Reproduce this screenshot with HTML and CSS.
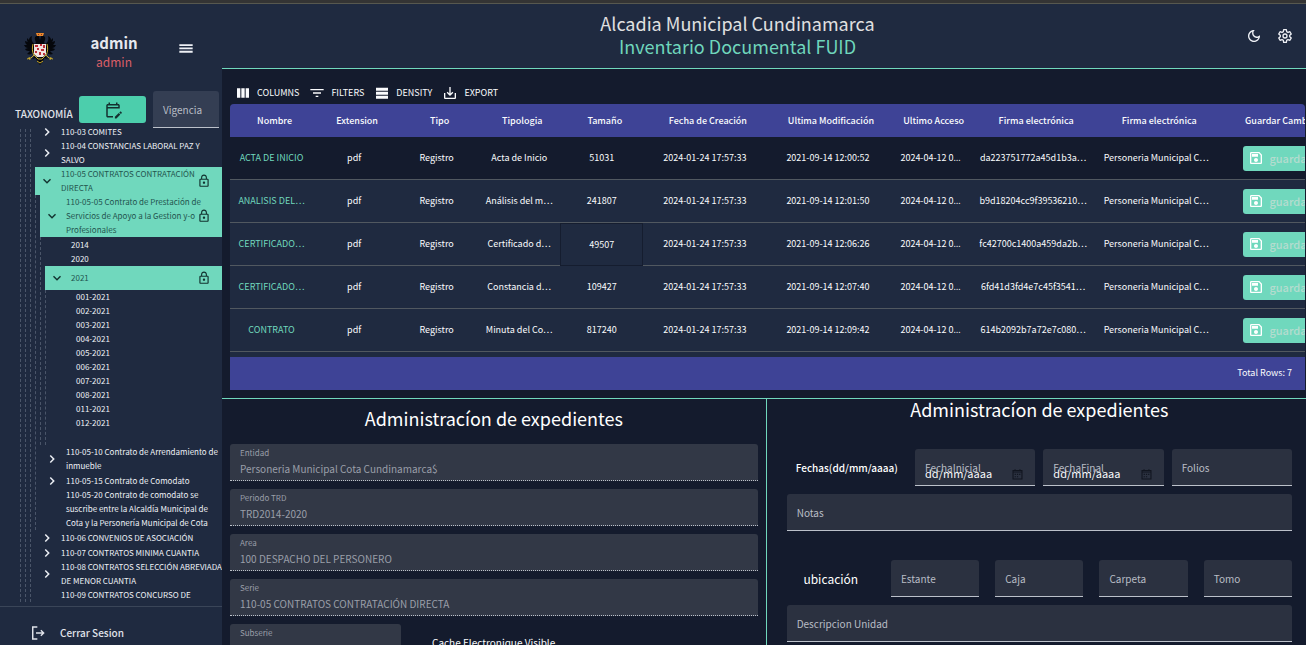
FILE: index.html
```
<!DOCTYPE html>
<html lang="es">
<head>
<meta charset="utf-8">
<title>Inventario Documental FUID</title>
<link rel="stylesheet" href="styles.css">
</head>
<body>
<svg class="sprite" aria-hidden="true">
  <symbol id="i-right" viewBox="0 0 24 24"><path d="M9.500 4 7.500 6l6 6-6 6 2 2 8-8z"/></symbol>
  <symbol id="i-down" viewBox="0 0 24 24"><path d="M18 7.500l-6 6-6-6-2 2 8 8 8-8z"/></symbol>
  <symbol id="i-lock" viewBox="0 0 24 24"><path d="M12 17c1.100 0 2-.9 2-2s-.9-2-2-2-2 .9-2 2 .9 2 2 2zm6-9h-1V6c0-2.800-2.200-5-5-5S7 3.200 7 6v2H6c-1.100 0-2 .9-2 2v10c0 1.100.9 2 2 2h12c1.100 0 2-.9 2-2V10c0-1.100-.9-2-2-2zM8.900 6c0-1.700 1.400-3.100 3.100-3.100s3.100 1.400 3.100 3.100v2H8.900V6zM18 20H6V10h12v10z"/></symbol>
  <symbol id="i-save" viewBox="0 0 24 24"><path d="M17 3H5c-1.100 0-2 .9-2 2v14c0 1.100.9 2 2 2h14c1.100 0 2-.9 2-2V7l-4-4zm2 16H5V5h11.200L19 7.800V19zm-7-7c-1.700 0-3 1.300-3 3s1.300 3 3 3 3-1.300 3-3-1.300-3-3-3zM6 6h9v4H6z"/></symbol>
  <symbol id="i-cal" viewBox="0 0 16 16"><path fill="none" stroke="currentColor" stroke-width="1.300" d="M2.500 3h11v10.500h-11zM2.500 5h11M5 1.500V3M11 1.500V3"/><path d="M4.500 7h1.500v1.500H4.500zM7.300 7h1.500v1.500H7.300zM10 7h1.500v1.500H10zM4.500 10h1.500v1.500H4.500zM7.300 10h1.500v1.500H7.300z"/></symbol>
</svg>
<div class="app">
  <aside class="sidebar">
    <div class="profile">
      <svg class="crest" viewBox="0 0 32 34" aria-label="Escudo">
        <path fill="#05070c" d="M15 4C12 3 10 5 11 8c1 2 1 3 0 4C8 11 7 7 8 4 6 5 5 6 5 8L3 6c0 2 0 3 1 4L1 9c0 2 1 3 2 4L0 13c1 2 2 3 4 3l-3 1c1 2 3 2 5 2l-3 3c3 1 5 0 6-2l2 4-3 3 4-1 1 3 3 4 3-4 1-3 4 1-3-3 2-4c1 2 3 3 6 2l-3-3c2 0 4 0 5-2l-3-1c2 0 3-1 4-3l-3 0c1-1 2-2 2-4l-3 1c1-1 1-2 1-4l-2 2c0-2-1-3-3-4 1 3 0 7-3 8-1-1-1-2 0-4 1-3-1-5-4-4l-1 4z"/>
        <path fill="#e8892c" d="M12 1h8l-1 3h-6z"/><path fill="#8b2b1d" d="M14 2h1v1h-1zM17 2h1v1h-1z"/>
        <path fill="none" stroke="#c9a92c" stroke-width="1" d="M9 12c-1 4-1 8 1 11l4 4h4l4-4c2-3 2-7 1-11M3 27l4-1 3-3M29 27l-4-1-3-3M13 29l3 2 3-2M5 25l1 3M27 25l-1 3"/>
        <path fill="#f0e3df" d="M10 12h12v10l-3 3h-6l-3-3z"/>
        <path fill="#bf2f38" d="M11 13h3v2h-3zM16 12h2v2h-2zM19 13h2v3h-2zM13 16h2v2h-2zM17 17h3v2h-3zM11 19h2v2h-2zM15 20h2v3h-2zM19 21h2v2h-2z"/>
      </svg>
      <div class="who"><strong>admin</strong><span>admin</span></div>
      <button class="icon-btn" aria-label="Menú"><svg class="ic16" viewBox="0 0 24 24"><path d="M2 17.500h20v-2.700H2zm0-5h20V9.800H2zM2 4.800v2.700h20V4.800z"/></svg></button>
    </div>
    <div class="tax-head">
      <span class="tax-title">TAXONOMÍA</span>
      <button class="tax-btn" aria-label="Editar calendario"><svg class="ic18" viewBox="0 0 24 24"><path d="M21 10V6c0-1.100-.9-2-2-2h-1V2h-2v2H8V2H6v2H5c-1.100 0-2 .9-2 2v14c0 1.100.9 2 2 2h7v-2H5V10h16zM5 8V6h14v2H5zm17.800 6.200.7.700c.4.400.4 1 0 1.400l-1 1-2.100-2.100 1-1c.4-.4 1-.4 1.400 0zm-3.100 1.700 2.100 2.100-5.200 5.200h-2.100v-2.100z"/></svg></button>
      <div class="field vig"><input id="vig" type="text"><label for="vig">Vigencia</label></div>
    </div>
    <nav class="tree">
      <ul><li><ul><li><ul class="groups">
        <li><div class="node"><svg><use href="#i-right"/></svg><span>110-03 COMITES</span></div></li>
        <li><div class="node"><svg><use href="#i-right"/></svg><span>110-04 CONSTANCIAS LABORAL PAZ Y<br>SALVO</span></div></li>
        <li><div class="node on"><svg><use href="#i-down"/></svg><span>110-05 CONTRATOS CONTRATACIÓN<br>DIRECTA</span><svg class="lock"><use href="#i-lock"/></svg></div>
          <ul>
            <li><div class="node on"><svg><use href="#i-down"/></svg><span>110-05-05 Contrato de Prestación de<br>Servicios de Apoyo a la Gestion y-o<br>Profesionales</span><svg class="lock"><use href="#i-lock"/></svg></div>
              <ul class="years">
                <li><div class="node leaf"><span>2014</span></div></li>
                <li><div class="node leaf"><span>2020</span></div></li>
                <li><div class="node on year"><svg><use href="#i-down"/></svg><span>2021</span><svg class="lock"><use href="#i-lock"/></svg></div>
                  <ul class="files">
                    <li><div class="node leaf"><span>001-2021</span></div></li>
                    <li><div class="node leaf"><span>002-2021</span></div></li>
                    <li><div class="node leaf"><span>003-2021</span></div></li>
                    <li><div class="node leaf"><span>004-2021</span></div></li>
                    <li><div class="node leaf"><span>005-2021</span></div></li>
                    <li><div class="node leaf"><span>006-2021</span></div></li>
                    <li><div class="node leaf"><span>007-2021</span></div></li>
                    <li><div class="node leaf"><span>008-2021</span></div></li>
                    <li><div class="node leaf"><span>011-2021</span></div></li>
                    <li><div class="node leaf"><span>012-2021</span></div></li>
                  </ul></li>
              </ul></li>
            <li><div class="node"><svg><use href="#i-right"/></svg><span>110-05-10 Contrato de Arrendamiento de<br>inmueble</span></div></li>
            <li><div class="node"><svg><use href="#i-right"/></svg><span>110-05-15 Contrato de Comodato</span></div></li>
            <li><div class="node leaf"><span>110-05-20 Contrato de comodato se<br>suscribe entre la Alcaldía Municipal de<br>Cota y la Personería Municipal de Cota</span></div></li>
          </ul></li>
        <li><div class="node"><svg><use href="#i-right"/></svg><span>110-06 CONVENIOS DE ASOCIACIÓN</span></div></li>
        <li><div class="node"><svg><use href="#i-right"/></svg><span>110-07 CONTRATOS MINIMA CUANTIA</span></div></li>
        <li><div class="node"><svg><use href="#i-right"/></svg><span>110-08 CONTRATOS SELECCIÓN ABREVIADA<br>DE MENOR CUANTIA</span></div></li>
        <li><div class="node leaf"><span>110-09 CONTRATOS CONCURSO DE</span></div></li>
      </ul></li></ul></li></ul>
    </nav>
    <button class="logout"><svg class="ic16" viewBox="0 0 24 24"><path d="M11 2H3v20h8v-2.200H5.200V4.200H11zM17 7l-1.500 1.500 2.400 2.500H9v2h8.900l-2.400 2.500L17 17l5-5z"/></svg><span>Cerrar Sesion</span></button>
  </aside>

  <main class="main">
    <header class="top">
      <div class="titles"><h1>Alcadia Municipal Cundinamarca</h1><h2>Inventario Documental FUID</h2></div>
      <button class="icon-btn" aria-label="Tema"><svg class="ic16" viewBox="0 0 24 24"><path d="M9.400 5.500c-.2.600-.3 1.300-.3 2 0 4.100 3.300 7.500 7.500 7.500.7 0 1.400-.1 2-.3C17.500 17.200 15 19 12 19c-3.900 0-7-3.100-7-7 0-2.900 1.800-5.400 4.400-6.500zM12 3c-5 0-9 4-9 9s4 9 9 9 9-4 9-9c0-.5 0-.9-.1-1.400-1 1.400-2.600 2.300-4.400 2.300-3 0-5.400-2.400-5.400-5.400 0-1.800.9-3.400 2.300-4.400C12.900 3 12.500 3 12 3z"/></svg></button>
      <button class="icon-btn" aria-label="Ajustes"><svg class="ic16" viewBox="0 0 24 24"><path fill="none" stroke="currentColor" stroke-width="2" stroke-linejoin="round" d="M10 2.500h4l.5 3 2 1.200 2.900-1.100 2 3.500-2.300 1.900v2l2.300 1.900-2 3.500-2.900-1.100-2 1.200-.5 3h-4l-.5-3-2-1.200-2.900 1.100-2-3.500L4.900 13v-2L2.600 9.100l2-3.500 2.900 1.100 2-1.200z"/><circle cx="12" cy="12" r="3" fill="none" stroke="currentColor" stroke-width="2"/></svg></button>
    </header>

    <section class="grid">
      <div class="toolbar">
        <button><svg class="ic16" viewBox="0 0 24 24"><path d="M3 5h5v14H3zM9.500 5h5v14h-5zM16 5h5v14h-5z"/></svg>COLUMNS</button>
        <button><svg class="ic16" viewBox="0 0 24 24"><path d="M10 18h4v-2h-4v2zM2 6v2h20V6H2zm4 7h12v-2H6v2z"/></svg>FILTERS</button>
        <button><svg class="ic16" viewBox="0 0 24 24"><path d="M3 4h18v4.500H3zM3 10h18v4.500H3zM3 16h18v4.500H3z"/></svg>DENSITY</button>
        <button><svg class="ic16" viewBox="0 0 24 24"><path d="M19 12v7H5v-7H3v7c0 1.100.9 2 2 2h14c1.100 0 2-.9 2-2v-7h-2zm-6 .7 2.600-2.600L17 11.500l-5 5-5-5 1.400-1.400 2.600 2.600V3h2z"/></svg>EXPORT</button>
      </div>
      <div class="scroller">
        <table>
          <colgroup><col class="m"><col class="n"><col class="m"><col class="n"><col class="m"><col class="w"><col class="w"><col class="n"><col class="w"><col class="w"><col class="w"></colgroup>
          <thead><tr><th>Nombre</th><th>Extension</th><th>Tipo</th><th>Tipologia</th><th>Tamaño</th><th>Fecha de Creación</th><th>Ultima Modificación</th><th>Ultimo Acceso</th><th>Firma electrónica</th><th>Firma electrónica</th><th>Guardar Cambios</th></tr></thead>
          <tbody>
            <tr><td>ACTA DE INICIO</td><td>pdf</td><td>Registro</td><td>Acta de Inicio</td><td>51031</td><td>2024-01-24 17:57:33</td><td>2021-09-14 12:00:52</td><td>2024-04-12 0<span class="dots">…</span></td><td>da223751772a45d1b3a…</td><td>Personeria Municipal C…</td><td><button class="save"><svg><use href="#i-save"/></svg>guardar</button></td></tr>
            <tr><td>ANALISIS DEL…</td><td>pdf</td><td>Registro</td><td>Análisis del m…</td><td>241807</td><td>2024-01-24 17:57:33</td><td>2021-09-14 12:01:50</td><td>2024-04-12 0<span class="dots">…</span></td><td>b9d18204cc9f39536210…</td><td>Personeria Municipal C…</td><td><button class="save"><svg><use href="#i-save"/></svg>guardar</button></td></tr>
            <tr><td>CERTIFICADO…</td><td>pdf</td><td>Registro</td><td>Certificado d…</td><td class="focus">49507</td><td>2024-01-24 17:57:33</td><td>2021-09-14 12:06:26</td><td>2024-04-12 0<span class="dots">…</span></td><td>fc42700c1400a459da2b…</td><td>Personeria Municipal C…</td><td><button class="save"><svg><use href="#i-save"/></svg>guardar</button></td></tr>
            <tr><td>CERTIFICADO…</td><td>pdf</td><td>Registro</td><td>Constancia d…</td><td>109427</td><td>2024-01-24 17:57:33</td><td>2021-09-14 12:07:40</td><td>2024-04-12 0<span class="dots">…</span></td><td>6fd41d3fd4e7c45f3541…</td><td>Personeria Municipal C…</td><td><button class="save"><svg><use href="#i-save"/></svg>guardar</button></td></tr>
            <tr><td>CONTRATO</td><td>pdf</td><td>Registro</td><td>Minuta del Co…</td><td>817240</td><td>2024-01-24 17:57:33</td><td>2021-09-14 12:09:42</td><td>2024-04-12 0<span class="dots">…</span></td><td>614b2092b7a72e7c080…</td><td>Personeria Municipal C…</td><td><button class="save"><svg><use href="#i-save"/></svg>guardar</button></td></tr>
          </tbody>
        </table>
      </div>
      <div class="total">Total Rows: 7</div>
    </section>

    <div class="panels">
      <section class="panel left">
        <h3>Administracíon de expedientes</h3>
        <div class="stack">
          <div class="field filled"><input id="entidad" value="Personeria Municipal Cota Cundinamarca$" disabled><label for="entidad">Entidad</label></div>
          <div class="field filled"><input id="periodo" value="TRD2014-2020" disabled><label for="periodo">Periodo TRD</label></div>
          <div class="field filled"><input id="area" value="100 DESPACHO DEL PERSONERO" disabled><label for="area">Area</label></div>
          <div class="field filled"><input id="serie" value="110-05 CONTRATOS CONTRATACIÓN DIRECTA" disabled><label for="serie">Serie</label></div>
          <div class="sub-row">
            <div class="field filled"><input id="subserie" disabled><label for="subserie">Subserie</label></div>
            <span>Cache Electronique Visible</span>
          </div>
        </div>
      </section>
      <section class="panel right">
        <h3>Administracíon de expedientes</h3>
        <div class="row four">
          <span class="row-label">Fechas(dd/mm/aaaa)</span>
          <div class="field date"><label for="fi">FechaInicial</label><input id="fi" type="text" value="dd/mm/aaaa"><svg><use href="#i-cal"/></svg></div>
          <div class="field date"><label for="ff">FechaFinal</label><input id="ff" type="text" value="dd/mm/aaaa"><svg><use href="#i-cal"/></svg></div>
          <div class="field"><input id="folios" type="text"><label for="folios">Folios</label></div>
        </div>
        <div class="field"><input id="notas" type="text"><label for="notas">Notas</label></div>
        <div class="row five">
          <span class="row-label big">ubicación</span>
          <div class="field"><input id="estante" type="text"><label for="estante">Estante</label></div>
          <div class="field"><input id="caja" type="text"><label for="caja">Caja</label></div>
          <div class="field"><input id="carpeta" type="text"><label for="carpeta">Carpeta</label></div>
          <div class="field"><input id="tomo" type="text"><label for="tomo">Tomo</label></div>
        </div>
        <div class="field"><input id="desc" type="text"><label for="desc">Descripcion Unidad</label></div>
      </section>
    </div>
  </main>
</div>
</body>
</html>
```
FILE: styles.css
```
* { box-sizing: border-box; }
body {
  margin: 0;
  height: 100vh;
  overflow: hidden;
  background: #141b2d;
  color: #fafbfd;
  font: 400 9px/14px "Noto Sans CJK KR", "Noto Sans", sans-serif;
}
button, input { font: inherit; color: inherit; }
button { border: 0; background: none; padding: 0; cursor: pointer; }
svg { fill: currentColor; flex: none; display: block; }
h1, h2, h3 { margin: 0; font-weight: 400; font-size: 18px; }
ul { list-style: none; margin: 0; padding: 0; }
.sprite { position: absolute; width: 0; height: 0; }
.ic16 { width: 16px; height: 16px; }
.ic18 { width: 18px; height: 18px; }

.app {
  display: flex;
  height: 100vh;
  border-top: 3px solid #343434;
}
.sidebar {
  width: 222px;
  flex: none;
  display: flex;
  flex-direction: column;
  background: #1f2a40;
  border-top: 1px solid #57584f;
}
.profile {
  display: grid;
  grid-template-columns: 32px 1fr 16px;
  align-items: center;
  align-content: start;
  padding: 23px 28px 0 24px;
  height: 86px;
}
.crest { width: 32px; height: 36px; }
.who { display: grid; text-align: center; padding-right: 6px; margin-top: 6px; }
.who strong { font-size: 15px; line-height: 20px; color: #e6e8ee; }
.who span { font-size: 12px; line-height: 18px; color: #db5f68; }
.icon-btn { display: grid; place-items: center; color: #eef0f5; }

.tax-head { display: flex; align-items: flex-end; padding: 0 3px 0 15px; height: 38px; flex: none; }
.tax-title { font-size: 10px; line-height: 20px; font-weight: 500; width: 64px; margin-bottom: 4px; flex: none; color: #e0e3ea; }
.tax-btn {
  display: grid; place-items: center; flex: none;
  width: 67px; height: 27px; margin-bottom: 5px;
  background: #4cceac; color: #14302f; border-radius: 3px;
}
.tax-head .vig { flex: 1; min-width: 0; margin-left: 7px; }

.tree { flex: 1; min-height: 0; overflow: hidden; padding-left: 20px; margin-bottom: 4px; font-size: 8px; }
.tree ul { border-left: 1px dashed #4a5569; padding-left: 4px; }
.tree .groups { margin-top: -4px; }
.tree .years { padding-top: 1px; }
.tree .files { padding-bottom: 15px; }
.node { display: flex; align-items: center; min-height: 15px; color: #eef1f6; }
.node svg { width: 12px; height: 12px; margin: 0 8px 0 6px; }
.node span { flex: 1; min-width: 0; white-space: nowrap; }
.leaf { min-height: 14px; padding-left: 26px; }
.on { background: #70d8bd; color: #23554f; }
.on svg { color: #12322f; }
.on.node .lock { width: 14px; height: 14px; margin: 0 11px 0 0; }
.year { min-height: 24px; }
.logout {
  display: flex; align-items: center; gap: 14px; flex: none;
  height: 39px; padding: 14px 30px 0; border-top: 1px solid #3a4558;
  font-size: 10px; line-height: 16px; font-weight: 500; color: #e0e3ea;
}

.main { flex: 1; min-width: 0; display: flex; flex-direction: column; }
.top {
  display: flex; align-items: center; gap: 15px; flex: none;
  height: 66px; padding: 0 13px 0 22px;
  background: #1f2a40; border-top: 1px solid #57584f; border-bottom: 1px solid #70d8bd;
}
.titles { flex: 1; text-align: center; padding-bottom: 3px; }
.titles h1, .titles h2 { line-height: 23px; }
.titles h1 { color: #e0e0e0; }
.titles h2 { color: #6fd6bc; }

.grid { padding: 0 1px 8px 8px; flex: none; }
.toolbar { display: flex; gap: 10px; height: 35px; padding: 12px 5px 0; }
.toolbar button { display: flex; align-items: center; gap: 6px; height: 24px; }
.scroller { overflow: hidden; border-radius: 4px 4px 0 0; background: #1f2a40; padding-bottom: 5px; }
table { width: 100%; min-width: 1111px; table-layout: fixed; border-collapse: separate; border-spacing: 0; }
.n { width: 82px; }
.m { width: 83px; }
.w { width: 123px; }
th { height: 33px; background: #3e4396; font-weight: 500; padding: 0 0 0 6px; white-space: nowrap; }
td { height: 43px; padding: 0; text-align: center; border-bottom: 1px solid #515860; white-space: nowrap; }
td:first-child { color: #70d8bd; }
tbody tr:first-child { background: #141b2d; }
.dots { font-family: "Noto Sans", sans-serif; }
.focus { border: 1px solid #151d2f; }
.save {
  display: flex; align-items: center; gap: 5px; margin: 0 auto;
  width: 72px; height: 25px; padding-left: 5px; border-radius: 3px;
  background: #70d8bd; color: #b4dccf; font-size: 11px; font-weight: 500;
}
.save svg { width: 16px; height: 16px; color: #fff; }
.total { height: 33px; line-height: 32px; padding-right: 13px; text-align: right; background: #3e4396; }

.panels { flex: 1; min-height: 0; display: grid; grid-template-columns: 101fr 100fr; border-top: 1px solid #70d8bd; }
.panel { min-width: 0; overflow: hidden; }
.panel h3 { text-align: center; line-height: 20px; color: #fff; }
.left { padding: 9px 8px 0; border-right: 1px solid #70d8bd; }
.stack { display: grid; gap: 8px; margin-top: 16px; }
.sub-row { display: flex; align-items: center; gap: 31px; font-size: 10px; }
.sub-row .field { width: 171px; }
.right { padding: 0 14px 0 20px; display: flex; flex-direction: column; gap: 8px; }
.right h3 { margin-bottom: 22px; }

.field { position: relative; height: 37px; flex: none; }
.field input {
  width: 100%; height: 100%; padding: 14px 10px 0; outline: 0;
  background: #2b3140; border: 0; border-bottom: 1px solid #bcc1ca; border-radius: 3px 3px 0 0;
  font-size: 10px;
}
.field label { position: absolute; left: 10px; top: 11px; font-size: 10px; line-height: 16px; color: #b9bdc5; }
.field.filled input { background: #323846; border-bottom-style: dotted; color: #9a9fa9; padding-top: 13px; }
.field.filled label { top: 3px; font-size: 8px; line-height: 12px; color: #9a9fa9; }
.field.vig input { background: #343e53; }
.field.date input { font-size: 11px; padding-top: 12px; }
.date svg { position: absolute; right: 11px; top: 19px; width: 13px; height: 13px; color: #11151f; }
.date label { z-index: 1; }
.row { display: grid; align-items: center; }
.four { grid-template-columns: repeat(4, 1fr); gap: 8px; }
.five { grid-template-columns: repeat(5, 1fr); gap: 16px; margin-top: 21px; }
.row-label { text-align: center; font-size: 10px; line-height: 16px; color: #fff; font-weight: 500; }
.big { font-size: 12px; font-weight: 400; }
```
